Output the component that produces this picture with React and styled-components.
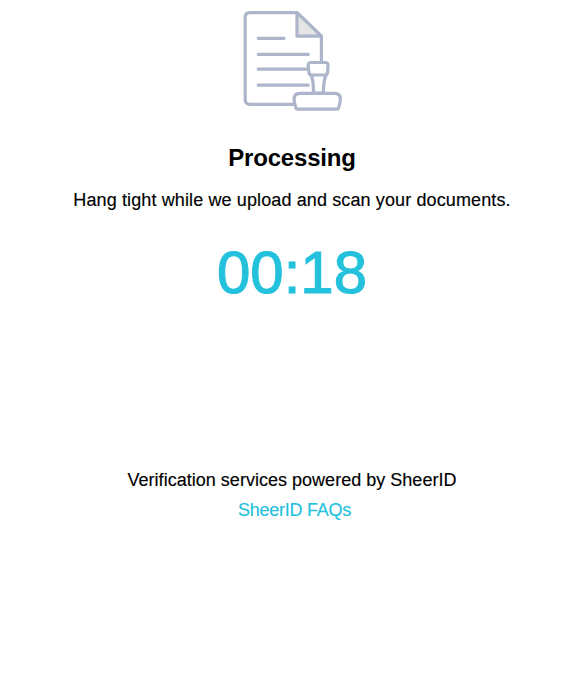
import React from "react";
import styled, { createGlobalStyle } from "styled-components";

const GlobalStyle = createGlobalStyle`
  * { box-sizing: border-box; }
  body { margin: 0; background: #fff; }
`;

const Page = styled.main`
  min-height: 694px;
  display: flex;
  flex-direction: column;
  align-items: center;
  padding: 10px 0 0 8px;
  background: #fff;
  color: #000;
  font-family: "Liberation Sans", Helvetica, Arial, sans-serif;
  text-align: center;
`;

const DocumentIcon = styled.svg`
  display: block;
  width: 100px;
  height: 102px;
`;

const Title = styled.h1`
  margin: 31px 0 0;
  font-size: 24px;
  line-height: 30px;
  letter-spacing: -0.18px;
`;

const Message = styled.p`
  margin: 14px 0 0;
  font-size: 18px;
  line-height: 26px;
  letter-spacing: 0.12px;
  white-space: nowrap;
  -webkit-text-stroke: 0.15px currentColor;
`;

const Timer = styled.div`
  margin-top: 25px;
  font-size: 60px;
  line-height: 70px;
  color: #24c1dc;
  -webkit-text-stroke: 1.1px currentColor;
`;

const Footer = styled.footer`
  margin-top: 157px;
  font-size: 18px;
  line-height: 30px;
  letter-spacing: 0.02px;
  -webkit-text-stroke: 0.15px currentColor;
`;

const FaqLink = styled.a`
  display: block;
  padding-left: 5px;
  color: #24c1dc;
  letter-spacing: -0.25px;
  text-decoration: none;
`;

export default function App() {
  return (
    <>
      <GlobalStyle />
      <Page>
        <DocumentIcon viewBox="242 10 100 102" fill="none" stroke="#adb5cb" strokeWidth="3.2" strokeLinecap="round" strokeLinejoin="round">
          <path d="M293 104.3H250Q245.2 104.3 245.2 99.5V17.5Q245.2 12.7 250 12.7H297L321.4 36.2V61" />
          <path d="M297 12.7V36.2H321.4Z" fill="#e5e5e6" />
          <path d="M258.2 38.3H284M258.2 54.4H308.3M258.2 69.1H307M258.2 85.1H308.3" />
          <path d="M311.3 75.5Q313.7 81 313.4 93H323.4Q323.4 81 325.9 75.5" fill="#fff" />
          <path d="M311 62.5H325.4Q328.3 62.5 328.1 65.5L327.5 72.5Q327.2 75 324.5 75H311.8Q309.2 75 308.9 72.5L308.2 65.5Q308 62.5 311 62.5Z" fill="#fff" />
          <path d="M300 93.4H334.5Q340.4 93.4 340.4 99Q340.3 103 338.7 107.5Q338.2 109.2 336.5 109.2H298Q296.3 109.2 295.8 107.5Q294.2 103 294.1 99Q294.1 93.4 300 93.4Z" fill="#fff" />
        </DocumentIcon>
        <Title>Processing</Title>
        <Message>Hang tight while we upload and scan your documents.</Message>
        <Timer>00:18</Timer>
        <Footer>
          Verification services powered by SheerID
          <FaqLink href="#">SheerID FAQs</FaqLink>
        </Footer>
      </Page>
    </>
  );
}
